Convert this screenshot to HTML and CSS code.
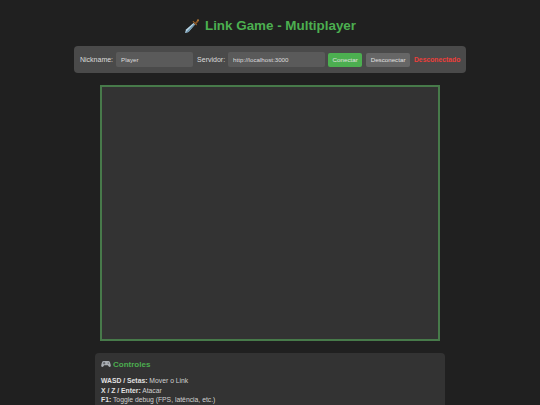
FILE: index.html
```html
<!DOCTYPE html>
<html lang="pt">
<head>
  <meta charset="UTF-8">
  <title>Link Game - Multiplayer</title>
  <link rel="stylesheet" href="styles.css">
</head>
<body>
  <div class="container">
    <h1 class="title">
      <svg class="title-icon" viewBox="0 0 16 16" width="16" height="16">
        <path d="M1 15 L2 11.5 L9.5 5 L11 6.5 L4.5 14 Z" fill="#b9d6e6"/>
        <path d="M1 15 L4.5 14 L11 6.5 L10.2 5.8 Z" fill="#6f94ab"/>
        <path d="M8.5 3.6 L9.4 3 L13 6.6 L12.4 7.5 Z" fill="#a5672c"/>
        <path d="M10.8 5 L13.2 2.2 L14.6 3.4 L12 6 Z" fill="#8a5526"/>
        <circle cx="14" cy="2.2" r="1" fill="#b67a36"/>
      </svg>
      Link Game - Multiplayer
    </h1>

    <div class="connection-bar">
      <label class="field-label">Nickname:</label>
      <input class="field nick-field" type="text" value="Player">
      <label class="field-label">Servidor:</label>
      <input class="field server-field" type="text" value="http://localhost:3000">
      <button class="btn btn-connect">Conectar</button>
      <button class="btn btn-disconnect">Desconectar</button>
      <span class="status">Desconectado</span>
    </div>

    <div class="game-canvas"></div>

    <div class="controls">
      <h3 class="controls-title">
        <svg class="controls-icon" viewBox="0 0 16 12" width="10" height="8">
          <path d="M4 1 H12 C14 1 15 4 15.6 8 C16 11 13.5 11.5 12 9.5 L11 8 H5 L4 9.5 C2.5 11.5 0 11 0.4 8 C1 4 2 1 4 1 Z" fill="#a9aeb3"/>
          <circle cx="11.5" cy="4.5" r="1" fill="#4a4d50"/>
          <rect x="3" y="4" width="4" height="1.2" fill="#4a4d50"/>
          <rect x="4.4" y="2.6" width="1.2" height="4" fill="#4a4d50"/>
        </svg>
        Controles
      </h3>
      <p class="control-line"><b>WASD / Setas:</b> Mover o Link</p>
      <p class="control-line"><b>X / Z / Enter:</b> Atacar</p>
      <p class="control-line"><b>F1:</b> Toggle debug (FPS, latência, etc.)</p>
    </div>
  </div>
</body>
</html>
```

FILE: styles.css
```css
html, body {
  margin: 0;
  padding: 0;
  height: 405px;
  overflow: hidden;
}

body {
  font-family: "Liberation Sans", Arial, sans-serif;
  background-color: #202020;
  color: #e0e0e0;
}

.container {
  display: flex;
  flex-direction: column;
  align-items: center;
  padding-top: 17px;
}

.title {
  display: flex;
  align-items: center;
  gap: 5px;
  margin: 0 0 12px;
  height: 17px;
  font-size: 13.4px;
  font-weight: bold;
  color: #4caf50;
}

.connection-bar {
  display: flex;
  align-items: center;
  box-sizing: border-box;
  width: 392px;
  height: 27px;
  padding: 0 6px;
  background-color: #4a4a4a;
  border-radius: 4px;
  font-size: 7px;
}

.field-label {
  margin-right: 3px;
  color: #dcdcdc;
}

.field {
  box-sizing: border-box;
  height: 15px;
  padding: 0 5px;
  border: none;
  border-radius: 2px;
  background-color: #5a5a5a;
  color: #dcdcdc;
  font-family: inherit;
  font-size: 6.2px;
  outline: none;
}

.nick-field {
  width: 77px;
  margin-right: 4px;
}

.server-field {
  width: 97px;
  margin-right: 3px;
}

.btn {
  height: 14px;
  padding: 0 4.5px;
  border: none;
  border-radius: 2px;
  font-family: inherit;
  font-size: 6.2px;
  color: #e0e0e0;
}

.btn-connect {
  background-color: #4caf50;
  margin-right: 4px;
}

.btn-disconnect {
  background-color: #666666;
  margin-right: 4px;
}

.status {
  font-size: 6.8px;
  font-weight: bold;
  color: #ec3f3b;
}

.game-canvas {
  box-sizing: border-box;
  width: 340px;
  height: 256px;
  margin-top: 12px;
  background-color: #333333;
  border: 2px solid #477a4a;
}

.controls {
  box-sizing: border-box;
  width: 350px;
  margin-top: 12px;
  padding: 6px;
  background-color: #333333;
  border-radius: 4px;
  font-size: 6.8px;
}

.controls-title {
  display: flex;
  align-items: center;
  gap: 2px;
  margin: 0 0 7px;
  height: 10px;
  font-size: 8px;
  font-weight: bold;
  color: #4caf50;
}

.control-line {
  margin: 0;
  line-height: 9.6px;
  color: #d0d0d0;
}

.control-line b {
  color: #e0e0e0;
}
```
